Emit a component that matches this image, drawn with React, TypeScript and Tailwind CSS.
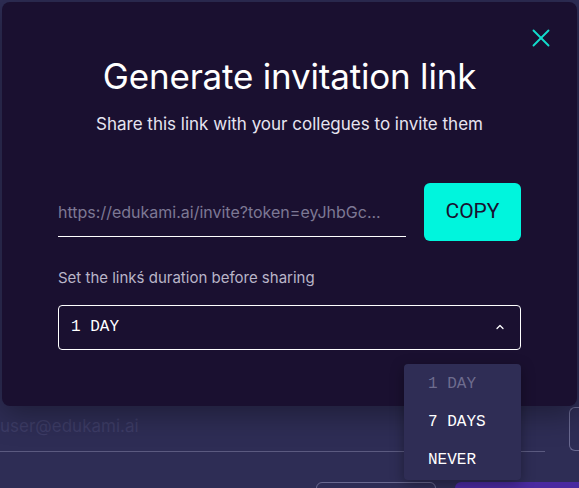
import { ChevronUp, X } from "lucide-react";

const options = [
  { label: "1 DAY", muted: true },
  { label: "7 DAYS", muted: false },
  { label: "NEVER", muted: false },
];

const sans = "font-['Inter','Noto_Sans',sans-serif]";
const mono = "font-['Liberation_Mono','DejaVu_Sans_Mono',monospace]";

export default function App() {
  return (
    <div className={`relative h-[488px] w-[579px] overflow-hidden bg-[#2e2d55] ${sans}`}>
      {/* page underneath the dialog */}
      <div className="flex h-full flex-col justify-end">
        <div className="flex items-end gap-6 pb-[36px]">
          <div className="w-[545px] border-b border-[#5b5a80] pb-[12px]">
            <span className="text-[17px] text-[#3d3c66]">user@edukami.ai</span>
          </div>
          <div className="mb-[1px] h-[44px] flex-1 rounded-l-md border border-r-0 border-[#6a6990]" />
        </div>
      </div>
      <div className="absolute bottom-[-10px] left-[316px] h-[16px] w-[120px] rounded-md border border-[#6a6990]" />
      <div className="absolute bottom-[-10px] left-[455px] h-[16px] w-[140px] rounded-md bg-[#4a2aa0]" />

      {/* dialog */}
      <div className="absolute left-[2px] top-[2px] h-[404px] w-[575px] rounded-lg bg-[#1a1030] shadow-[0_8px_30px_rgba(0,0,0,0.35)]">
        <button className="absolute right-[21px] top-[21px] text-[#12dccb]">
          <X size={30} strokeWidth={1.5} />
        </button>
        <div className="flex flex-col items-center pt-[50px]">
          <h1 className="text-[35px] font-normal leading-[48px] tracking-[-0.2px] text-white">
            Generate invitation link
          </h1>
          <p className="mt-[13px] text-[17px] leading-[22px] text-[#e6e4f0]">
            Share this link with your collegues to invite them
          </p>
        </div>
        <div className="mt-[48px] px-[56px]">
          <div className="flex items-center gap-[18px]">
            <div className="flex-1 border-b border-white pb-[12px] pt-[12px]">
              <div className="truncate text-[16px] text-[#7d7894]">
                https://edukami.ai/invite?token=eyJhbGc...
              </div>
            </div>
            <button className="h-[58px] w-[97px] rounded-md bg-[#00f5dd] font-['Roboto',sans-serif] text-[21px] text-[#1a1030]">
              COPY
            </button>
          </div>
          <p className="mt-[26px] text-[15px] text-[#b9b5c8]">
            Set the linkś duration before sharing
          </p>
          <div className="mt-[15px] flex h-[45px] items-center justify-between rounded border border-white pl-[12px] pr-[14px]">
            <span className={`${mono} text-[16px] text-white`}>1 DAY</span>
            <ChevronUp size={12} strokeWidth={2.5} className="text-white" />
          </div>
        </div>
      </div>

      {/* open select menu */}
      <ul className="absolute left-[404px] top-[364px] w-[117px] rounded bg-[#2f2d55] py-[1px] shadow-[0_4px_14px_rgba(0,0,0,0.35)]">
        {options.map((o) => (
          <li
            key={o.label}
            className={`${mono} flex h-[38px] items-center pl-[24px] text-[16px] ${o.muted ? "text-[#6e6c8e]" : "text-white"}`}
          >
            {o.label}
          </li>
        ))}
      </ul>
    </div>
  );
}
